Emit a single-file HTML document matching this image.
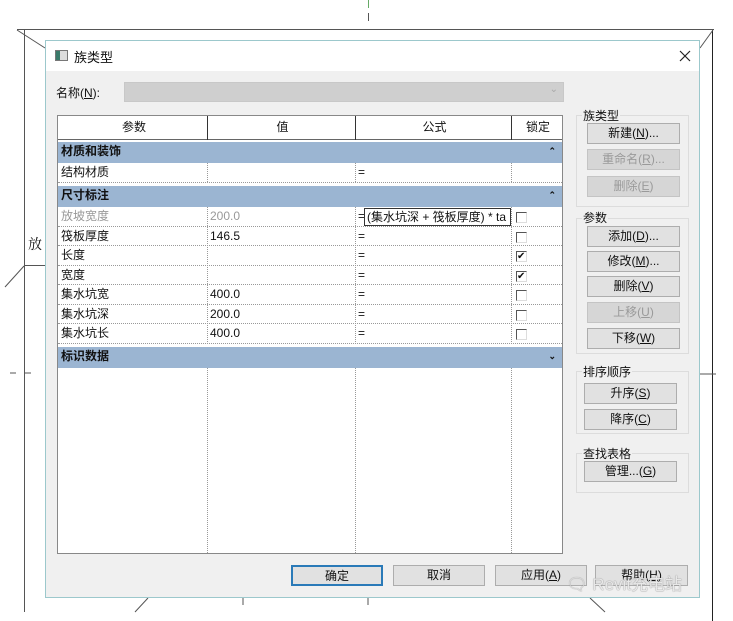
<!DOCTYPE html>
<html><head><meta charset="utf-8"><style>
*{margin:0;padding:0;box-sizing:border-box}
body{width:733px;height:621px;background:#fff;position:relative;overflow:hidden;font-family:"Liberation Sans","Noto Sans CJK SC",sans-serif;font-size:12px;color:#111}
.a{position:absolute}
.dlg{left:45px;top:40px;width:655px;height:558px;background:#f0f0f0;border:1px solid #9cc8cc}
.tb{left:0;top:0;width:653px;height:30px;background:#fff}
.cell{position:absolute;height:20px;line-height:19px;padding-left:3px;font-size:12px;white-space:nowrap;overflow:hidden}
.grp{background:#9bb5d2;font-weight:bold}
.btn{position:absolute;height:21px;border:1px solid #adadad;background:#e1e1e1;text-align:center;line-height:19px;font-size:12px}
.dis{color:#9a9a9a;background:#d6d6d6;border-color:#c4c4c4}
.gb{position:absolute;border:1px solid #dcdcdc}
.gl{position:absolute;background:#f0f0f0;padding:0 1px;font-size:12px}
.cb{position:absolute;width:11px;height:11px;border:1px solid #555;border-right-color:#ddd;border-bottom-color:#ddd;background:#fff}
.vl{position:absolute;border-left:1px dotted #999}
.hl{position:absolute;border-top:1px dotted #999}
</style></head><body>
<div class="a" style="left:17px;top:29px;width:697px;height:1px;background:#555"></div>
<div class="a" style="left:24px;top:30px;width:1px;height:582px;background:#555"></div>
<div class="a" style="left:712px;top:30px;width:1px;height:591px;background:#222"></div>
<div class="a" style="left:368px;top:0;width:1px;height:8px;background:#6a6"></div>
<div class="a" style="left:368px;top:13px;width:1px;height:8px;background:#555"></div>
<div class="a" style="left:28px;top:234px;font-size:14px;font-family:'Liberation Serif','Noto Serif CJK SC',serif">放</div>
<div class="a" style="left:24px;top:265px;width:21px;height:1px;background:#555"></div>
<svg class="a" style="left:0;top:0" width="733" height="621"><g stroke="#555" fill="none"><line x1="17" y1="30" x2="45" y2="48"/><line x1="713" y1="30" x2="700" y2="48"/><line x1="24" y1="266" x2="5" y2="287"/><line x1="10" y1="373" x2="16" y2="373"/><line x1="25" y1="373" x2="31" y2="373"/><line x1="700" y1="374" x2="716" y2="374"/><line x1="148" y1="598" x2="135" y2="612"/><line x1="590" y1="598" x2="605" y2="612"/><line x1="243" y1="598" x2="243" y2="605"/><line x1="368" y1="598" x2="368" y2="605"/></g></svg>
<div class="a dlg">
 <div class="a tb">
  <div class="a" style="left:9px;top:9px;width:13px;height:11px;border:1px solid #777;background:#ddd"><div style="width:4px;height:9px;background:#3a7a6a"></div></div>
  <div class="a" style="left:28px;top:6px;font-size:13px">族类型</div>
  <svg class="a" style="left:633px;top:9px" width="12" height="12"><path d="M1 1L11 11M11 1L1 11" stroke="#222" stroke-width="1.2"/></svg>
 </div>
 <div class="a" style="left:10px;top:43px">名称(<u>N</u>):</div>
 <div class="a" style="left:78px;top:41px;width:440px;height:20px;background:#cfcfcf;border:1px solid #c8c8c8"><span style="position:absolute;right:5px;top:1px;color:#aaa;font-size:10px">⌄</span></div>
 <div class="a" style="left:11px;top:74px;width:506px;height:439px;background:#fff;border:1px solid #888">
  <div class="a" style="left:0;top:0;width:504px;height:24px;border-bottom:1px solid #666;background:#fff"></div>
  <div class="a" style="left:149px;top:0;width:1px;height:24px;background:#333"></div>
  <div class="a" style="left:297px;top:0;width:1px;height:24px;background:#333"></div>
  <div class="a" style="left:453px;top:0;width:1px;height:24px;background:#333"></div>
  <div class="cell" style="left:0;top:2px;width:149px;text-align:center">参数</div>
  <div class="cell" style="left:149px;top:2px;width:148px;text-align:center">值</div>
  <div class="cell" style="left:297px;top:2px;width:156px;text-align:center">公式</div>
  <div class="cell" style="left:453px;top:2px;width:51px;text-align:center">锁定</div>
  <div class="cell grp" style="left:0;top:26px;width:504px;height:21px">材质和装饰<span style="position:absolute;right:6px;font-size:9px">⌃</span></div>
  <div class="cell" style="left:0;top:47px;width:149px">结构材质</div>
  <div class="cell" style="left:297px;top:47px;width:20px">=</div>
  <div class="cell grp" style="left:0;top:70px;width:504px;height:21px">尺寸标注<span style="position:absolute;right:6px;font-size:9px">⌃</span></div>
  <div class="cell" style="left:0;top:91px;color:#999">放坡宽度</div><div class="cell" style="left:149px;top:91px;color:#999">200.0</div>
  <div class="cell" style="left:297px;top:91px">=</div>
  <div class="a" style="left:306px;top:92px;width:147px;height:18px;border:1px solid #333;line-height:16px;padding-left:2px;white-space:nowrap;overflow:hidden">(集水坑深 + 筏板厚度) * ta</div>
  <div class="cell" style="left:0;top:111px">筏板厚度</div><div class="cell" style="left:149px;top:111px">146.5</div>
  <div class="cell" style="left:0;top:130px">长度</div>
  <div class="cell" style="left:0;top:150px">宽度</div>
  <div class="cell" style="left:0;top:169px">集水坑宽</div><div class="cell" style="left:149px;top:169px">400.0</div>
  <div class="cell" style="left:0;top:189px">集水坑深</div><div class="cell" style="left:149px;top:189px">200.0</div>
  <div class="cell" style="left:0;top:208px">集水坑长</div><div class="cell" style="left:149px;top:208px">400.0</div>
  <div class="cell" style="left:297px;top:111px">=</div><div class="cell" style="left:297px;top:130px">=</div><div class="cell" style="left:297px;top:150px">=</div><div class="cell" style="left:297px;top:169px">=</div><div class="cell" style="left:297px;top:189px">=</div><div class="cell" style="left:297px;top:208px">=</div>
  <div class="cb" style="left:458px;top:96px"></div><div class="cb" style="left:458px;top:116px"></div>
  <div class="cb" style="left:458px;top:135px;font-size:10px;line-height:9px">✔</div><div class="cb" style="left:458px;top:155px;font-size:10px;line-height:9px">✔</div>
  <div class="cb" style="left:458px;top:174px"></div><div class="cb" style="left:458px;top:194px"></div><div class="cb" style="left:458px;top:213px"></div>
  <div class="cell grp" style="left:0;top:231px;width:504px;height:21px">标识数据<span style="position:absolute;right:6px;font-size:9px">⌄</span></div>
  <div class="hl" style="left:0;top:66px;width:504px"></div>
  <div class="hl" style="left:0;top:110px;width:504px"></div><div class="hl" style="left:0;top:129px;width:504px"></div><div class="hl" style="left:0;top:149px;width:504px"></div><div class="hl" style="left:0;top:168px;width:504px"></div><div class="hl" style="left:0;top:188px;width:504px"></div><div class="hl" style="left:0;top:207px;width:504px"></div><div class="hl" style="left:0;top:227px;width:504px"></div>
  <div class="vl" style="left:149px;top:47px;height:19px"></div><div class="vl" style="left:297px;top:47px;height:19px"></div><div class="vl" style="left:453px;top:47px;height:19px"></div>
  <div class="vl" style="left:149px;top:91px;height:137px"></div><div class="vl" style="left:297px;top:91px;height:137px"></div><div class="vl" style="left:453px;top:91px;height:137px"></div>
  <div class="vl" style="left:149px;top:252px;height:185px"></div><div class="vl" style="left:297px;top:252px;height:185px"></div><div class="vl" style="left:453px;top:252px;height:185px"></div>
 </div>
 <div class="gb" style="left:530px;top:74px;width:113px;height:92px"></div><div class="gl" style="left:536px;top:66px">族类型</div>
 <div class="btn" style="left:541px;top:82px;width:93px">新建(<u>N</u>)...</div>
 <div class="btn dis" style="left:541px;top:108px;width:93px">重命名(<u>R</u>)...</div>
 <div class="btn dis" style="left:541px;top:135px;width:93px">删除(<u>E</u>)</div>
 <div class="gb" style="left:530px;top:177px;width:113px;height:136px"></div><div class="gl" style="left:536px;top:168px">参数</div>
 <div class="btn" style="left:541px;top:185px;width:93px">添加(<u>D</u>)...</div>
 <div class="btn" style="left:541px;top:210px;width:93px">修改(<u>M</u>)...</div>
 <div class="btn" style="left:541px;top:235px;width:93px">删除(<u>V</u>)</div>
 <div class="btn dis" style="left:541px;top:261px;width:93px">上移(<u>U</u>)</div>
 <div class="btn" style="left:541px;top:287px;width:93px">下移(<u>W</u>)</div>
 <div class="gb" style="left:530px;top:330px;width:113px;height:63px"></div><div class="gl" style="left:536px;top:322px">排序顺序</div>
 <div class="btn" style="left:538px;top:342px;width:93px">升序(<u>S</u>)</div>
 <div class="btn" style="left:538px;top:368px;width:93px">降序(<u>C</u>)</div>
 <div class="gb" style="left:530px;top:412px;width:113px;height:40px"></div><div class="gl" style="left:536px;top:404px">查找表格</div>
 <div class="btn" style="left:538px;top:420px;width:93px">管理...(<u>G</u>)</div>
 <div class="btn" style="left:245px;top:524px;width:92px;border:2px solid #2a7ab8">确定</div>
 <div class="btn" style="left:347px;top:524px;width:92px">取消</div>
 <div class="btn" style="left:449px;top:524px;width:92px">应用(<u>A</u>)</div>
 <div class="btn" style="left:549px;top:524px;width:93px">帮助(<u>H</u>)</div>
 <div class="a" style="left:520px;top:529px;font-size:17px;color:#e8e8e8;text-shadow:0 0 1px #666">🗨 Revit充电站</div>
</div>
</body></html>
